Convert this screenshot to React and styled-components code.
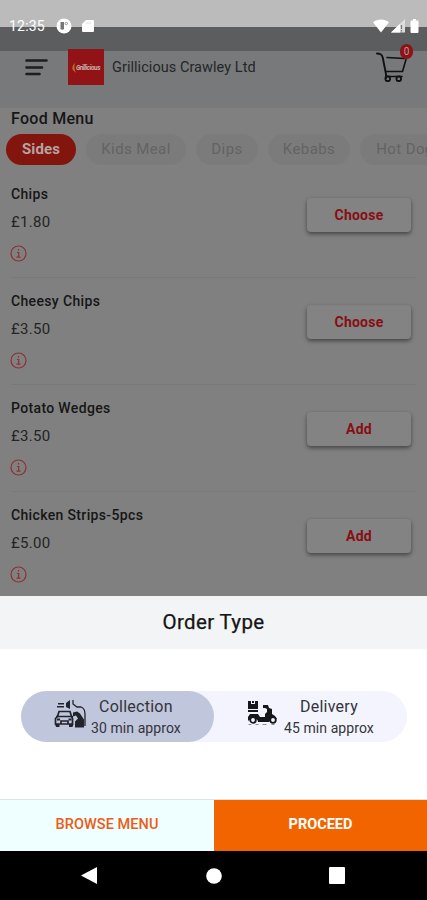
import React from "react";
import styled, { createGlobalStyle } from "styled-components";

const GlobalStyle = createGlobalStyle`
  * { box-sizing: border-box; }
  body { margin: 0; background: #000; font-family: Roboto, "Liberation Sans", sans-serif; }
  button { font-family: inherit; border: 0; padding: 0; }
`;

const Screen = styled.div`
  width: 427px;
  height: 900px;
  overflow: hidden;
  display: flex;
  flex-direction: column;
  background: #808080;
`;

const StatusBar = styled.div`
  height: 51px;
  flex: none;
  display: flex;
  align-items: center;
  padding: 1px 7px 0 9px;
  color: #fff;
  background: linear-gradient(#bbbbbb 27px, #5c5d5e 27px);
`;

const Clock = styled.span`
  width: 46px;
  font-size: 14px;
  letter-spacing: 0.2px;
  line-height: 16px;
  white-space: nowrap;
`;

const StatusIcons = styled.div`
  display: flex;
  align-items: center;
  gap: ${(p) => p.$gap}px;
  margin-left: ${(p) => (p.$end ? "auto" : "1px")};
  svg { display: block; }
`;

const Header = styled.header`
  height: 57px;
  flex: none;
  display: flex;
  align-items: flex-start;
  background: #77797b;
  padding-left: 25px;
`;

const MenuIcon = styled.svg`
  display: block;
  margin-top: 7px;
`;

const Logo = styled.div`
  width: 36px;
  height: 36px;
  margin: -2px 0 0 20px;
  background: #921316;
  display: flex;
  align-items: center;
  justify-content: center;
  padding-top: 2px;
  color: #c9b5ad;
  font-size: 6.5px;
  font-weight: 700;
  font-style: italic;
  letter-spacing: -0.4px;
`;

const ShopName = styled.h1`
  margin: 8px 0 0 8px;
  font-size: 14.5px;
  font-weight: 400;
  line-height: 18px;
  letter-spacing: 0.05px;
  color: #252627;
  white-space: nowrap;
`;

const Cart = styled.div`
  position: relative;
  margin: 0 14px 0 auto;
  width: 37px;
  height: 36px;
`;

const CartBadge = styled.span`
  position: absolute;
  top: -7px;
  left: 24px;
  width: 13px;
  height: 15px;
  border-radius: 7px;
  background: #8c1316;
  color: #b99b9c;
  font-size: 10px;
  line-height: 15px;
  text-align: center;
`;

const SectionTitle = styled.h2`
  margin: 0;
  padding: 1px 11px 0;
  height: 25.5px;
  flex: none;
  font-size: 16px;
  font-weight: 500;
  letter-spacing: 0.28px;
  line-height: 19px;
  color: #161616;
`;

const Categories = styled.nav`
  display: flex;
  flex: none;
  gap: 10px;
  height: 37.5px;
  padding-left: 6px;
  overflow: hidden;
`;

const Category = styled.span`
  flex: none;
  width: ${(p) => p.$width}px;
  height: 31px;
  border-radius: 16px;
  display: flex;
  align-items: center;
  justify-content: center;
  font-size: 15px;
  white-space: nowrap;
  letter-spacing: ${(p) => (p.$active ? 0.15 : 0.4)}px;
  font-weight: ${(p) => (p.$active ? 700 : 400)};
  color: ${(p) => (p.$active ? "#b5a4a2" : "#636363")};
  background: ${(p) => (p.$active ? "#83150f" : "#7b7b7b")};
`;

const Items = styled.main`
  flex: none;
  height: 424.5px;
  overflow: hidden;
  padding: 0 11px;
`;

const Item = styled.article`
  height: 107px;
  display: flex;
  justify-content: space-between;
  border-bottom: 1px solid #787979;
`;

const ItemText = styled.div`
  padding-top: 14px;
`;

const ItemName = styled.h3`
  margin: 0;
  font-size: 14px;
  font-weight: 500;
  line-height: 18px;
  letter-spacing: 0.35px;
  color: #161616;
  white-space: nowrap;
`;

const Price = styled.div`
  margin: 10px 0 14px;
  font-size: 15px;
  line-height: 18px;
  letter-spacing: 0.3px;
  color: #242424;
`;

const InfoIcon = styled.svg`
  display: block;
  margin-left: -1px;
`;

const ItemButton = styled.button`
  width: 104px;
  height: 34px;
  margin: 27px 5px 0 0;
  border-radius: 4px;
  background: #838383;
  box-shadow: 0 2px 4px rgba(0, 0, 0, 0.48);
  color: #870f14;
  font-size: 14px;
  font-weight: 700;
  letter-spacing: 0.22px;
`;

const Sheet = styled.section`
  flex: none;
  height: 255.5px;
  background: #fff;
  display: flex;
  flex-direction: column;
`;

const SheetTitle = styled.h2`
  margin: 0;
  height: 53.5px;
  background: #f2f4f6;
  text-align: center;
  font-size: 20.5px;
  line-height: 52px;
  font-weight: 400;
  letter-spacing: 0.35px;
  color: #151515;
  -webkit-text-stroke: 0.25px #151515;
`;

const SheetBody = styled.div`
  height: 150px;
  padding: 42px 20px 0 21px;
`;

const TypeSwitch = styled.div`
  display: flex;
  height: 51px;
  border-radius: 26px;
  background: #f3f4fd;
`;

const TypeOption = styled.div`
  display: flex;
  width: 193px;
  height: 51px;
  padding-left: 33px;
  gap: ${(p) => p.$gap}px;
  border-radius: 26px;
  background: ${(p) => (p.$active ? "#c0c6dc" : "transparent")};
  svg { flex: none; margin-top: 8px; }
`;

const TypeText = styled.div`
  display: flex;
  flex-direction: column;
  align-items: center;
  padding-top: 6px;
  color: #33343b;
  white-space: nowrap;
`;

const TypeName = styled.span`
  font-size: 16px;
  line-height: 20px;
  letter-spacing: 0.25px;
`;

const TypeTime = styled.span`
  margin-top: 2px;
  font-size: 14px;
  line-height: 18px;
  letter-spacing: 0.08px;
`;

const Actions = styled.div`
  height: 52px;
  display: flex;
  border-top: 1px solid #dce5e5;
`;

const Action = styled.button`
  width: ${(p) => (p.$primary ? 213 : 214)}px;
  padding-bottom: 2px;
  background: ${(p) => (p.$primary ? "#f26400" : "#efffff")};
  color: ${(p) => (p.$primary ? "#fff" : "#ed5b17")};
  font-size: 14.5px;
  font-weight: ${(p) => (p.$primary ? 700 : 500)};
  letter-spacing: ${(p) => (p.$primary ? 0 : 0.06)}px;
`;

const NavBar = styled.div`
  height: 49px;
  flex: none;
  background: #000;
  display: flex;
  align-items: center;
  justify-content: space-between;
  padding: 0 82px 0 81px;
`;

const categories = [
  { name: "Sides", width: 70, active: true },
  { name: "Kids Meal", width: 100 },
  { name: "Dips", width: 62 },
  { name: "Kebabs", width: 82 },
  { name: "Hot Dogs", width: 98 },
];

const items = [
  { name: "Chips", price: "£1.80", action: "Choose" },
  { name: "Cheesy Chips", price: "£3.50", action: "Choose" },
  { name: "Potato Wedges", price: "£3.50", action: "Add" },
  { name: "Chicken Strips-5pcs", price: "£5.00", action: "Add" },
];

function CollectionIcon() {
  return (
    <svg width="32" height="30" viewBox="0 0 32 30" fill="#22242c">
      <path d="M4 4h6v1.500H4zM3 7h7v1.500H3zM12 4l4-3v9l-4-2z" />
      <path d="M19 1v4l4 3h4c3 1 4 4 4 7v12" fill="none" stroke="#22242c" strokeWidth="1.3" />
      <path d="M19 13.500l4-1 3 2 2 3 2 3v8h-9v-6l3-3-2-3-3 1z" />
      <path
        d="M3.500 17.500L5 12.500h11l1.500 5 1 2v5.500H1.500v-5.500zM2 17.500h17M7 25v-3h7v3"
        fill="none"
        stroke="#22242c"
        strokeWidth="1.7"
      />
      <path d="M1 25h4.500v3H2zM15 25h4.500l-1 3H15zM3 19.500h3v2H3zM14.500 19.500h3v2h-3z" />
    </svg>
  );
}

function DeliveryIcon() {
  return (
    <svg width="31" height="30" viewBox="0 0 31 30" fill="#16171b">
      <path d="M1 2h3v3h4V2h3v8H1zM5 2h2v2H5zM1 11h10v2H1z" />
      <path d="M16 6h5l1 3 3 1v5l3 2 2 3h-5l-3 3H11c0-4-7-4-10-1v-4l2-3h8l2 3h5v-3l2-2v-3l-2-1h-2z" />
      <g fill="#f3f4fd" stroke="#16171b" strokeWidth="1.8">
        <circle cx="6" cy="21" r="2.800" />
        <circle cx="26" cy="21" r="2.800" />
      </g>
      <path d="M1.500 25.500h3m4 0h3m4 0h4m5 0h3" stroke="#8d8f97" strokeWidth="1" />
    </svg>
  );
}

export default function App() {
  return (
    <>
      <GlobalStyle />
      <Screen>
        <StatusBar>
          <Clock>12:35</Clock>
          <StatusIcons $gap={10}>
            <svg width="16" height="16" viewBox="0 0 16 16">
              <circle cx="8" cy="8" r="7.500" fill="#fff" />
              <path d="M4.500 4h3.500v5.500a1.800 1.800 0 1 1-3.500 0z" fill="#777" />
              <circle cx="10.300" cy="5.500" r="1.200" fill="none" stroke="#999" />
            </svg>
            <svg width="12" height="14" viewBox="0 0 12 14">
              <path d="M4 1h7a1 1 0 0 1 1 1v10a1 1 0 0 1-1 1H1a1 1 0 0 1-1-1V5z" fill="#fff" />
              <path d="M4 4h5" stroke="#ddd" strokeWidth="1" />
            </svg>
          </StatusIcons>
          <StatusIcons $end $gap={2}>
            <svg width="16" height="14" viewBox="0 0 16 14">
              <path d="M0 3.300C4.500-.4 11.500-.4 16 3.300L8 13.500z" fill="#fff" />
            </svg>
            <svg width="14" height="14" viewBox="0 0 14 14">
              <path d="M14 0v13.500H0z" fill="#ddd" />
              <path d="M9 5v8.500H0z" fill="#fff" />
              <path d="M10.500 6v4m0 1v1.500" stroke="#777" strokeWidth="1.3" />
            </svg>
            <svg width="13" height="14" viewBox="0 0 13 14">
              <path d="M6 0h3v1.500h1.500a1 1 0 0 1 1 1V13a1 1 0 0 1-1 1h-6a1 1 0 0 1-1-1V2.500a1 1 0 0 1 1-1H6z" fill="#fff" />
            </svg>
          </StatusIcons>
        </StatusBar>

        <Header>
          <MenuIcon width="23" height="20" viewBox="0 0 23 20">
            <path d="M1.500 2.500h20M1.500 9.500h15.500M1.500 16h13" stroke="#1c1d1f" strokeWidth="2.600" strokeLinecap="round" />
          </MenuIcon>
          <Logo>
            <svg width="4" height="10" viewBox="0 0 4 10">
              <path d="M3 0C0 3 0 5 1 7l3 3C2 6 2 4 3 0z" fill="#c46d20" />
            </svg>
            Grillicious
          </Logo>
          <ShopName>Grillicious Crawley Ltd</ShopName>
          <Cart>
            <svg width="34" height="36" viewBox="0 0 34 36" fill="none" stroke="#101112" strokeWidth="1.900" strokeLinecap="round" strokeLinejoin="round">
              <path d="M1 2.500c4 0 5 1 5.700 4L10 23v4" />
              <path d="M11 6.500l17.500 1M30 8.500L26.500 20.500H10M10 25.500h16" strokeWidth="1.600" />
              <rect x="9.500" y="25.500" width="4.500" height="4.500" rx="1.500" />
              <rect x="20.500" y="25.500" width="4.500" height="4.500" rx="1.500" />
            </svg>
            <CartBadge>0</CartBadge>
          </Cart>
        </Header>

        <SectionTitle>Food Menu</SectionTitle>
        <Categories>
          {categories.map((c) => (
            <Category key={c.name} $width={c.width} $active={c.active}>
              {c.name}
            </Category>
          ))}
        </Categories>

        <Items>
          {items.map((item) => (
            <Item key={item.name}>
              <ItemText>
                <ItemName>{item.name}</ItemName>
                <Price>{item.price}</Price>
                <InfoIcon width="17" height="17" viewBox="0 0 17 17" fill="none" stroke="#8c3036" strokeWidth="1.200">
                  <circle cx="8.500" cy="8.500" r="7.500" />
                  <path d="M8.500 4v1.500M7 7.500h1.700v4.500M6.500 12.200h4" />
                </InfoIcon>
              </ItemText>
              <ItemButton>{item.action}</ItemButton>
            </Item>
          ))}
        </Items>

        <Sheet>
          <SheetTitle>Order Type</SheetTitle>
          <SheetBody>
            <TypeSwitch>
              <TypeOption $active $gap={5}>
                <CollectionIcon />
                <TypeText>
                  <TypeName>Collection</TypeName>
                  <TypeTime>30 min approx</TypeTime>
                </TypeText>
              </TypeOption>
              <TypeOption $gap={6}>
                <DeliveryIcon />
                <TypeText>
                  <TypeName>Delivery</TypeName>
                  <TypeTime>45 min approx</TypeTime>
                </TypeText>
              </TypeOption>
            </TypeSwitch>
          </SheetBody>
          <Actions>
            <Action>BROWSE MENU</Action>
            <Action $primary>PROCEED</Action>
          </Actions>
        </Sheet>

        <NavBar>
          <svg width="17" height="18" viewBox="0 0 17 18">
            <path d="M16 0v17L0 8.500z" fill="#fff" />
          </svg>
          <svg width="16" height="16" viewBox="0 0 16 16">
            <circle cx="8" cy="8" r="7.800" fill="#fff" />
          </svg>
          <svg width="16" height="17" viewBox="0 0 16 17">
            <rect width="16" height="17" rx="1" fill="#fff" />
          </svg>
        </NavBar>
      </Screen>
    </>
  );
}
